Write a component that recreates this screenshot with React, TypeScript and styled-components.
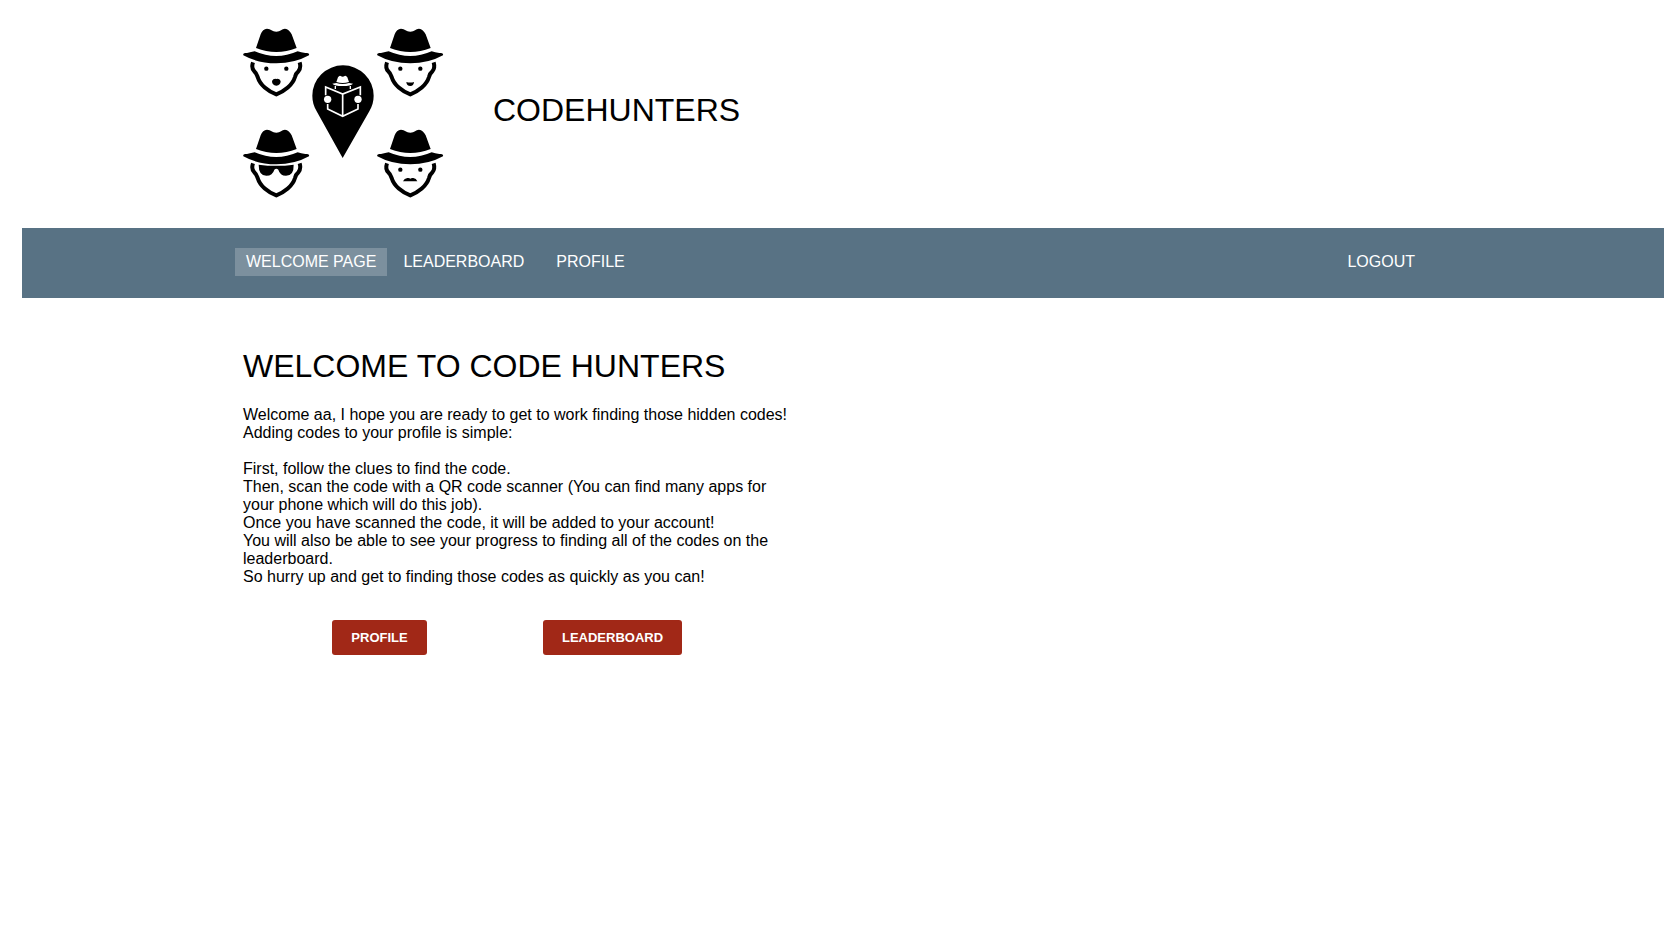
import React from "react";
import styled, { createGlobalStyle, css } from "styled-components";

const GlobalStyle = createGlobalStyle`
  *, *::before, *::after { box-sizing: border-box; }
  body {
    margin: 0;
    background: #fff;
    color: #000;
    font: 16px/18px Arial, "Liberation Sans", sans-serif;
  }
`;

const Page = styled.div`
  padding: 0 1px 0 22px;
`;

const Container = styled.div`
  max-width: 1200px;
  margin: 0 auto;
`;

const Header = styled.header`
  padding: 28px 0 30px;
`;

const Brand = styled(Container)`
  display: flex;
  align-items: center;
  gap: 48px;
`;

const Logo = styled.svg`
  display: block;
  width: 202px;
  height: 170px;
  flex: none;
`;

const Title = styled.h1`
  margin: 0;
  font-size: 32px;
  line-height: 38px;
  font-weight: 400;
  text-transform: uppercase;
`;

const BrandName = styled(Title)`
  padding-bottom: 6px;
`;

const SectionTitle = styled(Title).attrs({ as: "h2" })`
  margin-bottom: 21px;
`;

const NavBar = styled.nav`
  background: #587284;
  padding: 20px 0 22px;
`;

const NavRow = styled(Container)`
  display: flex;
  justify-content: space-between;
`;

const NavList = styled.ul<{ $outdent?: boolean }>`
  display: flex;
  list-style: none;
  margin: 0 ${(p) => (p.$outdent ? "0 0 -8px" : "12px 0 0")};
  padding: 0;
`;

const NavLink = styled.a<{ $active?: boolean }>`
  display: block;
  color: #fff;
  text-decoration: none;
  text-transform: uppercase;
  line-height: 20px;
  padding: 4px 16px;
  ${(p) =>
    p.$active &&
    css`
      background: #7c909e;
      padding: 4px 11px;
    `}
`;

const Main = styled.main`
  padding: 49px 0;
`;

const Article = styled.section`
  max-width: 550px;
`;

const Copy = styled.p`
  margin: 0 0 18px;
`;

const Actions = styled.div`
  display: grid;
  grid-template-columns: 1fr 1fr;
  justify-items: center;
  padding: 16px 64px 0 20px;
`;

const ActionButton = styled.button`
  height: 35px;
  padding: 0 19px;
  border: 0;
  border-radius: 3px;
  background: #a12817;
  color: #fff;
  font: bold 13px/18px Arial, "Liberation Sans", sans-serif;
  text-transform: uppercase;
  cursor: pointer;
`;

type FaceKind = "beard" | "smile" | "glasses" | "moustache";

const Eyes = () => (
  <>
    <circle cx="91" cy="146" r="6.5" />
    <circle cx="151" cy="146" r="6.5" />
  </>
);

const features: Record<FaceKind, React.ReactNode> = {
  beard: (
    <>
      <Eyes />
      <path d="M108 183Q112 175 121 177Q130 175 134 183Q134 196 121 197Q108 196 108 183Z" />
    </>
  ),
  smile: (
    <>
      <Eyes />
      <path d="M109 186Q121 189 132 186Q131 198 121 198Q110 198 109 186Z" />
    </>
  ),
  glasses: (
    <path d="M68 131Q121 138 173 131Q174 164 150 164Q132 164 127 146Q121 140 115 146Q110 164 91 164Q68 164 68 131Z" />
  ),
  moustache: (
    <>
      <Eyes />
      <path d="M99 181Q103 172 112 171Q118 170 121 173Q124 170 130 171Q139 172 142 181Z" />
    </>
  ),
};

const Hat = () => (
  <>
    <path d="M60 84L74 43Q80 27 93 26C105 26 108 35 121 35C134 35 137 26 147 26Q160 28 167 43L182 84Q121 108 60 84Z" />
    <path d="M22 106C20 100 25 99 33 99Q46 96 56 94Q121 122 185 94Q195 97 208 99C216 99 221 100 219 106Q176 130 121 130Q65 130 22 106Z" />
  </>
);

const Face = ({ x, y, kind }: { x: number; y: number; kind: FaceKind }) => (
  <g transform={`translate(${x} ${y}) scale(0.3333)`}>
    <Hat />
    <path
      d="M51 127Q45 144 55 154C60 158 62 162 65 171C72 195 96 214 121 223C145 214 170 195 177 171C179 162 182 158 187 154Q196 144 191 127"
      fill="none"
      stroke="#000"
      strokeWidth="12"
    />
    {features[kind]}
  </g>
);

const Pin = () => (
  <g transform="translate(57 32) scale(0.3333)">
    <path d="M128 294L50 154C41 138 37 124 37 107A92 91 0 0 1 221 107C221 124 217 138 208 154Z" />
    <g fill="#fff">
      <path d="M109 66L114 52Q118 46 122 48Q128 52 134 48Q138 46 142 52L147 66Q128 72 109 66Z" />
      <path d="M97 71L109 69Q128 75 147 69L159 71Q153 78 128 78Q103 78 97 71Z" />
      <circle cx="83" cy="118" r="11" />
      <circle cx="174" cy="118" r="11" />
    </g>
    <g fill="none" stroke="#fff" strokeWidth="5">
      <path d="M106 78V87M151 78V87" strokeWidth="4" />
      <path d="M77 106V81L128 102L181 81V106M128 102V168M83 132V147L128 169L174 147V132" />
    </g>
  </g>
);

const HuntersLogo = () => (
  <Logo viewBox="0 0 202 170" role="img" aria-label="Codehunters logo">
    <Face x={-7} y={-8} kind="beard" />
    <Face x={127} y={-8} kind="smile" />
    <Face x={-7} y={93} kind="glasses" />
    <Face x={127} y={93} kind="moustache" />
    <Pin />
  </Logo>
);

export default function App() {
  return (
    <>
      <GlobalStyle />
      <Page>
        <Header>
          <Brand>
            <HuntersLogo />
            <BrandName>Codehunters</BrandName>
          </Brand>
        </Header>
        <NavBar>
          <NavRow>
            <NavList $outdent>
              <li>
                <NavLink href="#welcome" $active aria-current="page">
                  Welcome page
                </NavLink>
              </li>
              <li>
                <NavLink href="#leaderboard">Leaderboard</NavLink>
              </li>
              <li>
                <NavLink href="#profile">Profile</NavLink>
              </li>
            </NavList>
            <NavList>
              <li>
                <NavLink href="#logout">Logout</NavLink>
              </li>
            </NavList>
          </NavRow>
        </NavBar>
        <Main>
          <Container>
            <Article>
              <SectionTitle>Welcome to Code Hunters</SectionTitle>
              <Copy>
                Welcome aa, I hope you are ready to get to work finding those hidden codes!
                <br />
                Adding codes to your profile is simple:
              </Copy>
              <Copy>
                First, follow the clues to find the code.
                <br />
                Then, scan the code with a QR code scanner (You can find many apps for your phone
                which will do this job).
                <br />
                Once you have scanned the code, it will be added to your account!
                <br />
                You will also be able to see your progress to finding all of the codes on the
                leaderboard.
                <br />
                So hurry up and get to finding those codes as quickly as you can!
              </Copy>
              <Actions>
                <ActionButton type="button">Profile</ActionButton>
                <ActionButton type="button">Leaderboard</ActionButton>
              </Actions>
            </Article>
          </Container>
        </Main>
      </Page>
    </>
  );
}
